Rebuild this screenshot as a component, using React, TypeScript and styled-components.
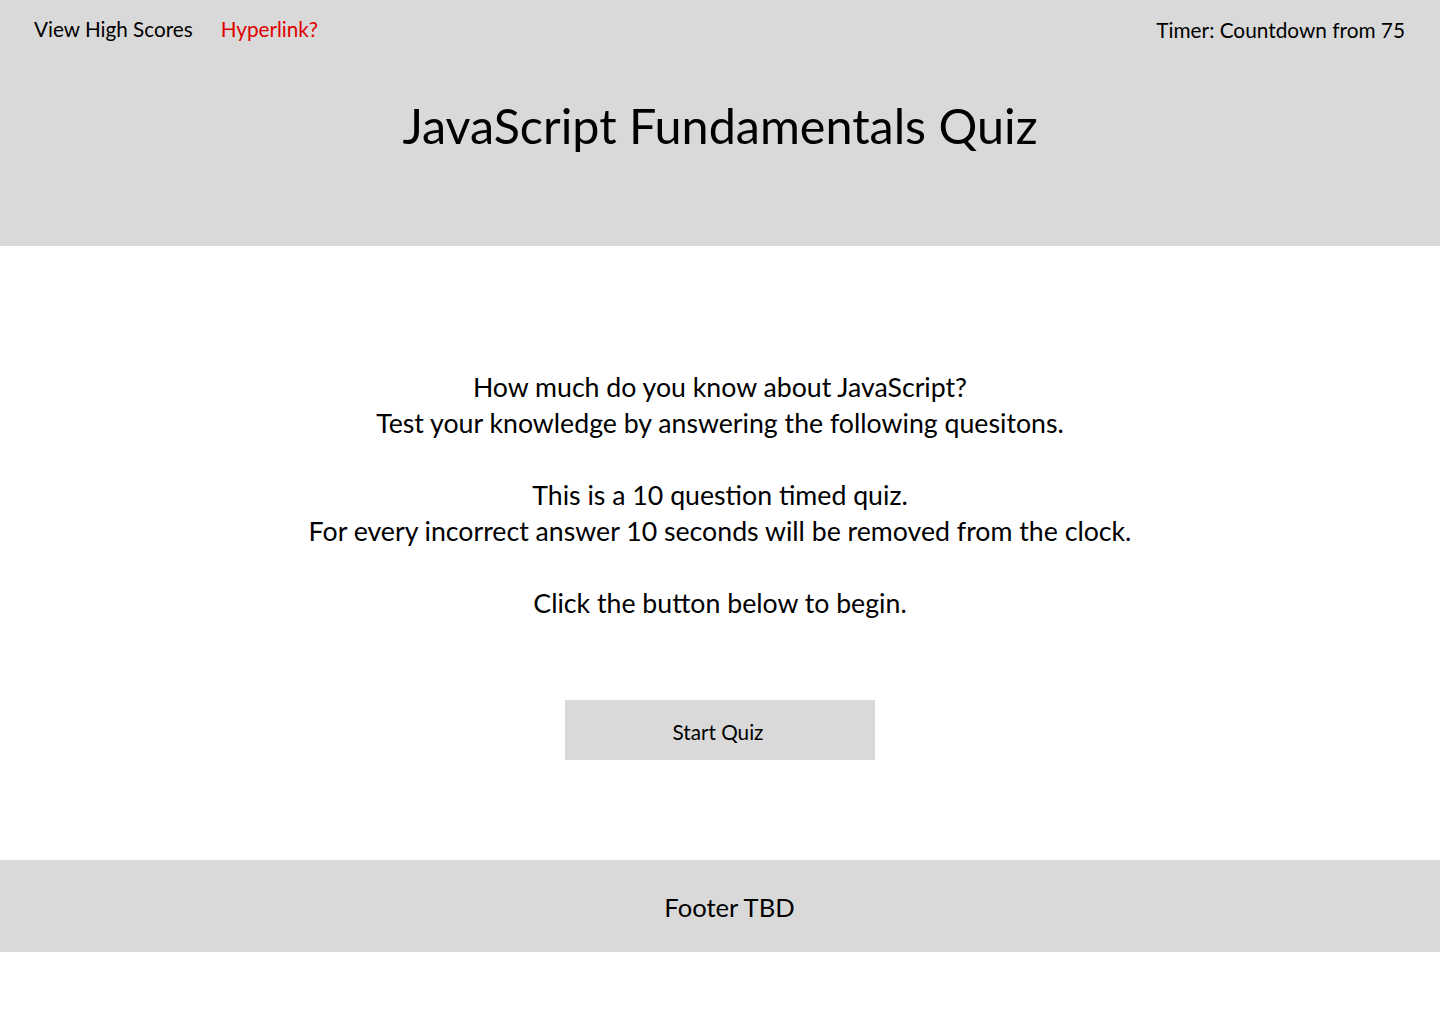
import React from "react";
import styled, { createGlobalStyle } from "styled-components";

const Global = createGlobalStyle`
  html, body { margin: 0; padding: 0; background: #ffffff; }
  body { font-family: Lato, "Liberation Sans", sans-serif; color: #000; }
`;

const Header = styled.header`
  background: #d9d9d9;
  height: 246px;
  display: flex;
  flex-direction: column;
`;

const NavBar = styled.nav`
  display: flex;
  align-items: center;
  justify-content: space-between;
  height: 58px;
  padding: 0 35px 0 34px;
  font-size: 20.7px;
`;

const NavLinks = styled.div`
  display: flex;
  gap: 28px;
`;

const NavLink = styled.a<{ $accent?: boolean }>`
  color: ${(p) => (p.$accent ? "#e00000" : "#000")};
  text-decoration: none;
`;

const Timer = styled.span`
  font-size: 20.8px;
`;

const Title = styled.h1`
  margin: 0;
  padding-top: 35px;
  text-align: center;
  font-size: 48.5px;
  font-weight: 400;
  line-height: 64px;
`;

const Main = styled.main`
  height: 614px;
  display: flex;
  flex-direction: column;
  align-items: center;
  padding-top: 123px;
  box-sizing: border-box;
`;

const Intro = styled.p`
  margin: 0;
  text-align: center;
  font-size: 26.7px;
  line-height: 36px;
`;

const StartButton = styled.button`
  margin-top: 79px;
  width: 310px;
  height: 60px;
  border: none;
  background: #d9d9d9;
  font-family: inherit;
  font-size: 20.7px;
  color: #000;
  padding: 4px 4px 0 0;
`;

const Footer = styled.footer`
  background: #d9d9d9;
  height: 92px;
  display: flex;
  align-items: center;
  justify-content: center;
  padding: 2px 0 0 19px;
  box-sizing: border-box;
  font-size: 25.6px;
`;

export default function App() {
  return (
    <>
      <Global />
      <Header>
        <NavBar>
          <NavLinks>
            <NavLink>View High Scores</NavLink>
            <NavLink $accent>Hyperlink?</NavLink>
          </NavLinks>
          <Timer>Timer: Countdown from 75</Timer>
        </NavBar>
        <Title>JavaScript Fundamentals Quiz</Title>
      </Header>
      <Main>
        <Intro>
          How much do you know about JavaScript?
          <br />
          Test your knowledge by answering the following quesitons.
          <br />
          <br />
          This is a 10 question timed quiz.
          <br />
          For every incorrect answer 10 seconds will be removed from the clock.
          <br />
          <br />
          Click the button below to begin.
        </Intro>
        <StartButton>Start Quiz</StartButton>
      </Main>
      <Footer>Footer TBD</Footer>
    </>
  );
}
